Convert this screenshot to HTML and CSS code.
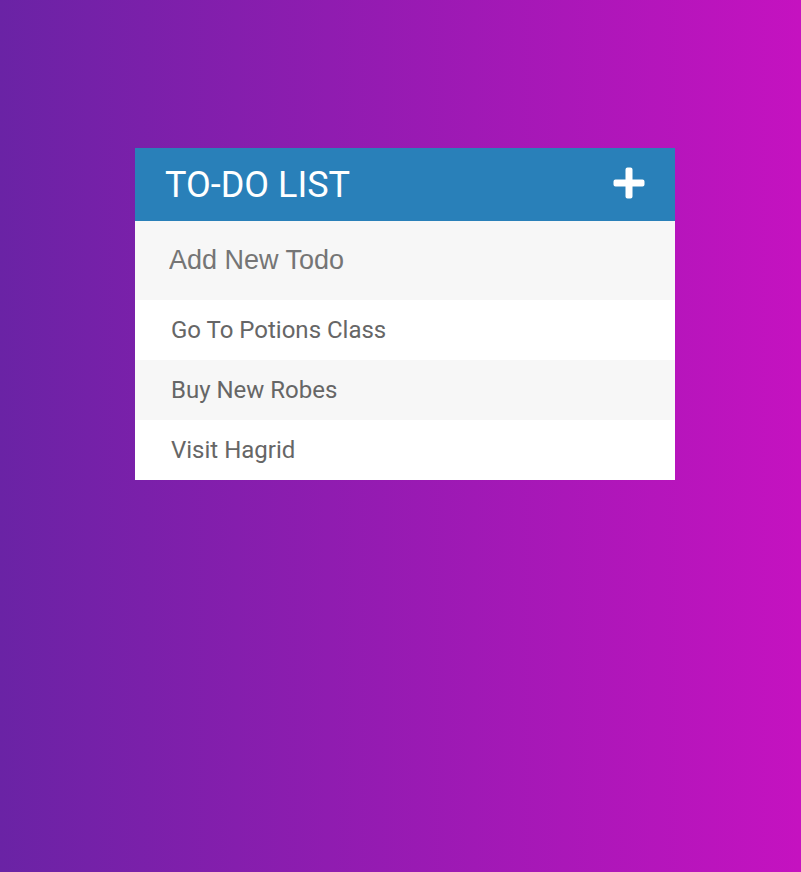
FILE: index.html
```html
<!DOCTYPE html>
<html>
<head>
<meta charset="utf-8">
<link rel="stylesheet" href="styles.css">
</head>
<body>
<div class="card">
  <div class="header">
    <h1 class="title">TO-DO LIST</h1>
    <svg class="plus" width="32" height="32" viewBox="0 0 32 32"><path d="M12.5 2.5a2 2 0 0 1 2-2h3a2 2 0 0 1 2 2v10h10a2 2 0 0 1 2 2v3a2 2 0 0 1-2 2h-10v10a2 2 0 0 1-2 2h-3a2 2 0 0 1-2-2v-10h-10a2 2 0 0 1-2-2v-3a2 2 0 0 1 2-2h10z" fill="#fff"/></svg>
  </div>
  <input class="new" type="text" placeholder="Add New Todo">
  <ul class="list">
    <li class="item">Go To Potions Class</li>
    <li class="item">Buy New Robes</li>
    <li class="item">Visit Hagrid</li>
  </ul>
</div>
</body>
</html>
```
FILE: styles.css
```css
html, body {
  margin: 0;
  height: 100%;
}
body {
  background: linear-gradient(to right, #6a23a5, #c512c0);
  font-family: Roboto, "Liberation Sans", sans-serif;
  padding-top: 148px;
  box-sizing: border-box;
}
.card {
  width: 540px;
  margin-left: 135px;
  background: #fff;
}
.header {
  background: #2980b9;
  height: 73px;
  display: flex;
  align-items: center;
  justify-content: space-between;
  padding: 0 30px 0 30px;
}
.title {
  margin: 0;
  font-weight: 400;
  font-size: 36px;
  color: #fff;
  letter-spacing: 0;
}
.plus {
  display: block;
  margin-top: -4px;
}
.new {
  display: block;
  width: 100%;
  box-sizing: border-box;
  height: 79px;
  border: none;
  outline: none;
  background: #f7f7f7;
  padding: 0 0 0 34px;
  font-family: "Liberation Sans", Arial, sans-serif;
  font-size: 27px;
  color: #666;
}
.new::placeholder {
  color: #757575;
}
.list {
  list-style: none;
  margin: 0;
  padding: 0;
}
.item {
  height: 60px;
  line-height: 60px;
  padding-left: 36px;
  font-size: 24px;
  color: #666;
  background: #fff;
}
.item:nth-child(2) {
  background: #f7f7f7;
}
```
